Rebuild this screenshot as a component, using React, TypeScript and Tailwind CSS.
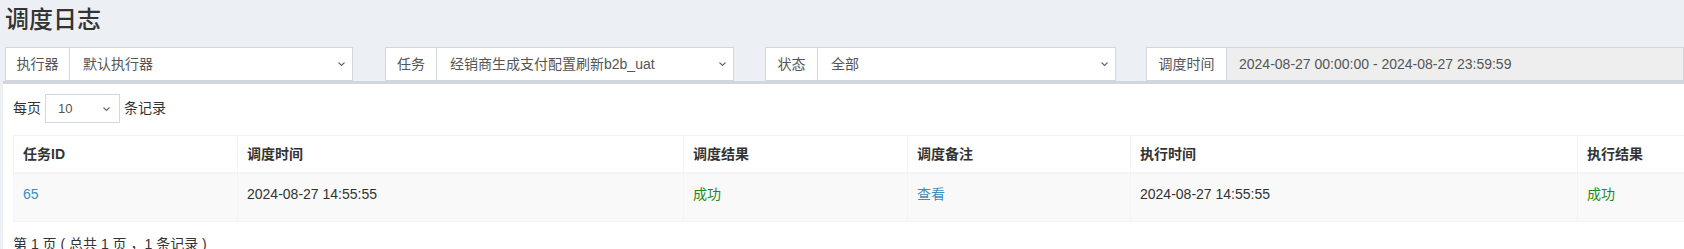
const font = "font-['Liberation_Sans','Noto_Sans_CJK_SC',sans-serif]";

const Chevron = () => (
  <svg width="9" height="6" viewBox="0 0 9 6" className="shrink-0">
    <path d="M1.5 1.5 L4.5 4.5 L7.5 1.5" fill="none" stroke="#666" strokeWidth="1.1" />
  </svg>
);

const filters = [
  { label: "执行器", value: "默认执行器", labelW: "w-[65px]", w: "w-[348px]", ml: "ml-[5px]" },
  { label: "任务", value: "经销商生成支付配置刷新b2b_uat", labelW: "w-[52px]", w: "w-[349px]", ml: "ml-[32px]" },
  { label: "状态", value: "全部", labelW: "w-[53px]", w: "w-[351px]", ml: "ml-[31px]" },
];

const columns = [
  { title: "任务ID", w: "w-[224px]" },
  { title: "调度时间", w: "w-[446px]" },
  { title: "调度结果", w: "w-[224px]" },
  { title: "调度备注", w: "w-[223px]" },
  { title: "执行时间", w: "w-[447px]" },
  { title: "执行结果", w: "w-[224px]" },
];

const row = [
  <span className="text-[#3c8dbc]">65</span>,
  <span>2024-08-27 14:55:55</span>,
  <span className="text-[#1a8a1a]">成功</span>,
  <span className="text-[#3c8dbc]">查看</span>,
  <span>2024-08-27 14:55:55</span>,
  <span className="text-[#1a8a1a]">成功</span>,
];

const App = () => {
  return (
    <div className={`w-[1684px] h-[249px] overflow-hidden bg-[#ecf0f5] text-[14px] text-[#333] ${font}`}>
      <h1 className="pl-[5px] pt-[7px] text-[24px] leading-[26px] font-medium">调度日志</h1>

      {/* filters */}
      <div className="mt-[14px] flex h-[34px] text-[#555] whitespace-nowrap">
        {filters.map((f, i) => (
          <div key={i} className={`flex h-full ${f.w} ${f.ml}`}>
            <div className={`${f.labelW} shrink-0 flex items-center justify-center bg-white border border-[#d2d6de]`}>
              {f.label}
            </div>
            <div className="flex-1 flex items-center justify-between pl-[13px] pr-[6px] bg-white border-y border-r border-[#d2d6de]">
              <span>{f.value}</span>
              <Chevron />
            </div>
          </div>
        ))}
        <div className="flex h-full flex-1 ml-[30px]">
          <div className="w-[81px] shrink-0 flex items-center justify-center bg-white border border-[#d2d6de]">
            调度时间
          </div>
          <div className="flex-1 flex items-center pl-[12px] bg-[#eee] border-y border-r border-[#d2d6de]">
            2024-08-27 00:00:00 - 2024-08-27 23:59:59
          </div>
        </div>
      </div>

      {/* box */}
      <div className="ml-[3px] bg-white border-t-[3px] border-[#d2d6de] h-[200px] overflow-hidden">
        <div className="flex items-center pl-[10px] pt-[10px] whitespace-nowrap">
          <span>每页</span>
          <div className="ml-[4px] w-[75px] h-[29px] flex items-center justify-between pl-[12px] pr-[8px] border border-[#d2d6de] text-[#555] text-[13px]">
            <span>10</span>
            <Chevron />
          </div>
          <span className="ml-[4px]">条记录</span>
        </div>

        {/* table */}
        <div className="ml-[10px] mt-[12px] w-max border-t border-l border-[#f4f4f4]">
          <div className="flex border-b-2 border-[#f4f4f4]">
            {columns.map((c, i) => (
              <div key={i} className={`${c.w} shrink-0 px-[9px] py-[8px] leading-[20px] font-bold border-r border-[#f4f4f4]`}>
                {c.title}
              </div>
            ))}
          </div>
          <div className="flex bg-[#f9f9f9] border-b border-[#f4f4f4]">
            {row.map((cell, i) => (
              <div key={i} className={`${columns[i].w} shrink-0 px-[9px] pt-[10px] pb-[17px] leading-[20px] border-r border-[#f4f4f4]`}>
                {cell}
              </div>
            ))}
          </div>
        </div>

        <div className="pl-[10px] mt-[12px] leading-[20px]">第 1 页 ( 总共 1 页 ，1 条记录 )</div>
      </div>
    </div>
  );
};

export default App;
